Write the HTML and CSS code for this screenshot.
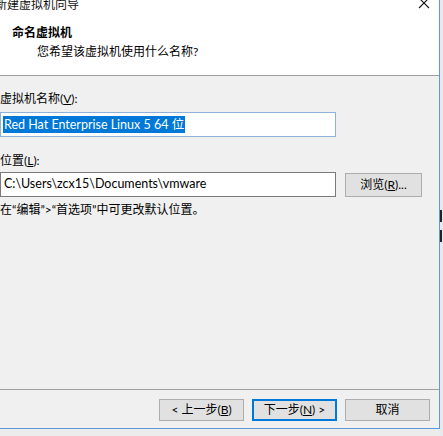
FILE: index.html
```html
<!DOCTYPE html>
<html lang="zh-CN">
<head>
<meta charset="utf-8">
<title>新建虚拟机向导</title>
<link rel="stylesheet" href="styles.css">
</head>
<body>
<div class="screen">
  <div class="window">
    <div class="titlebar">
      <span class="title-text">新建虚拟机向导</span>
      <svg class="close" width="12" height="12" viewBox="0 0 12 12">
        <path d="M1 1 L11 11 M11 1 L1 11" stroke="#1a1a1a" stroke-width="1.1" fill="none"/>
      </svg>
    </div>
    <div class="header">
      <div class="h-title">命名虚拟机</div>
      <div class="h-sub">您希望该虚拟机使用什么名称?</div>
    </div>
    <div class="content">
      <div class="label">虚拟机名称(<u>V</u>):</div>
      <div class="textbox focused"><span class="sel">Red Hat Enterprise Linux 5 64 位</span></div>
      <div class="label label2">位置(<u>L</u>):</div>
      <div class="row">
        <div class="textbox">C:\Users\zcx15\Documents\vmware</div>
        <div class="btn browse">浏览(<u>R</u>)...</div>
      </div>
      <div class="hint">在“编辑”&gt;“首选项”中可更改默认位置。</div>
    </div>
    <div class="footer">
      <div class="btn">&lt; 上一步(<u>B</u>)</div>
      <div class="btn default">下一步(<u>N</u>) &gt;</div>
      <div class="btn">取消</div>
    </div>
  </div>
  <div class="outside">
    <span class="mark m1"></span>
    <span class="mark m2"></span>
  </div>
</div>
</body>
</html>
```

FILE: styles.css
```css
html, body {
  margin: 0;
  padding: 0;
}
body {
  background: #ececec;
  font-family: "Lato", "Noto Sans CJK SC", sans-serif;
  font-size: 12px;
  color: #000;
  width: 443px;
  height: 436px;
  overflow: hidden;
}
.screen {
  display: flex;
  align-items: flex-start;
  height: 436px;
}
.window {
  width: 439px;
  height: 428px;
  border-right: 1px solid #5e9ad6;
  border-bottom: 1px solid #5e9ad6;
  background: #f0f0f0;
  display: flex;
  flex-direction: column;
  flex: none;
}
.titlebar {
  height: 14px;
  background: #fff;
  display: flex;
  justify-content: space-between;
  align-items: flex-start;
  overflow: hidden;
}
.title-text {
  display: block;
  line-height: 16px;
  margin: -3px 0 0 -5px;
  color: #111;
}
.close {
  margin: -3px 9px 0 0;
}
.header {
  height: 62px;
  box-sizing: border-box;
  background: #fff;
  border-bottom: 1px solid #a0a0a0;
  padding: 11px 0 0 12px;
}
.h-title {
  font-weight: bold;
  line-height: 16px;
}
.h-sub {
  line-height: 16px;
  margin: 3px 0 0 25px;
}
.content {
  height: 313px;
  box-sizing: border-box;
  padding-top: 15px;
}
.label {
  line-height: 16px;
}
.label2 {
  margin-top: 16px;
}
.textbox {
  width: 336px;
  height: 25px;
  box-sizing: border-box;
  background: #fff;
  border: 1px solid #7a7a7a;
  line-height: 21px;
  padding-left: 3px;
  white-space: nowrap;
  font-size: 12.5px;
}
.focused {
  margin-top: 5px;
  border-color: #8fb2d9;
  padding-left: 2px;
  padding-top: 1px;
}
.sel {
  background: #0078d7;
  color: #fff;
  line-height: 17px;
  display: inline-block;
  padding: 0 1px;
}
.row {
  display: flex;
  align-items: flex-start;
  margin-top: 3px;
}
.row .textbox {
  line-height: 22px;
}
.btn {
  box-sizing: border-box;
  background: #e1e1e1;
  border: 1px solid #adadad;
  width: 85px;
  height: 22px;
  line-height: 20px;
  text-align: center;
  white-space: nowrap;
}
.browse {
  width: 77px;
  height: 24px;
  line-height: 22px;
  margin: 1px 0 0 9px;
}
.hint {
  line-height: 16px;
  margin-top: 5px;
}
.footer {
  flex: 1;
  border-top: 1px solid #a0a0a0;
  display: flex;
  justify-content: flex-end;
  align-items: flex-start;
  gap: 8px;
  padding: 9px 9px 0 0;
}
.default {
  border-color: #0078d7;
  box-shadow: inset 0 0 0 1px #0078d7;
}
u {
  text-decoration: underline;
  text-underline-offset: 1px;
}
.outside {
  flex: 1;
  height: 436px;
  background: #e6e9ee;
  display: flex;
  flex-direction: column;
}
.mark {
  display: block;
  width: 2px;
  background: #222;
}
.m1 {
  height: 12px;
  margin-top: 210px;
}
.m2 {
  height: 12px;
  margin-top: 8px;
}
```
